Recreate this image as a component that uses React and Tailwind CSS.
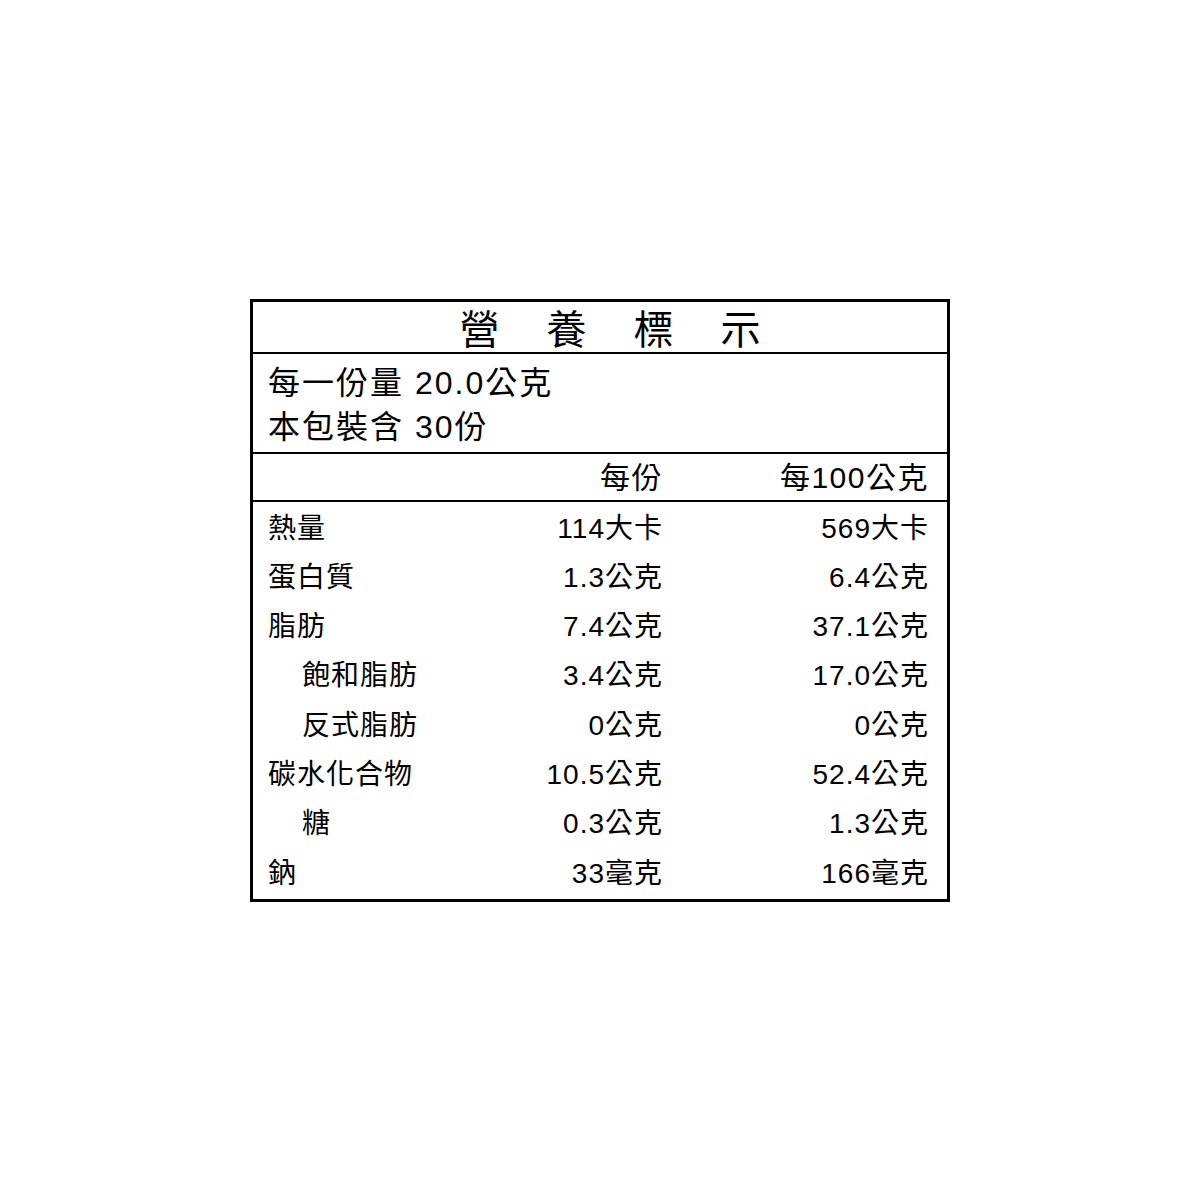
const rows = [
  { label: '熱量', a: '114大卡', b: '569大卡' },
  { label: '蛋白質', a: '1.3公克', b: '6.4公克' },
  { label: '脂肪', a: '7.4公克', b: '37.1公克' },
  { label: '飽和脂肪', a: '3.4公克', b: '17.0公克', indent: true },
  { label: '反式脂肪', a: '0公克', b: '0公克', indent: true },
  { label: '碳水化合物', a: '10.5公克', b: '52.4公克' },
  { label: '糖', a: '0.3公克', b: '1.3公克', indent: true },
  { label: '鈉', a: '33毫克', b: '166毫克' },
];

const App = () => {
  return (
    <div className="w-full h-[1200px] bg-white flex items-center justify-center text-black font-['Liberation_Sans','Noto_Sans_CJK_TC',sans-serif]">
      <div className="w-[700px] border-[3px] border-black flex flex-col">
        {/* Title */}
        <div className="h-[52px] border-b-2 border-black flex items-center justify-center gap-[47px] pl-[20px] text-[40px] leading-none font-['Noto_Sans_CJK_TC',sans-serif]">
          {['營', '養', '標', '示'].map((c) => (
            <span key={c}>{c}</span>
          ))}
        </div>

        {/* Serving */}
        <div className="h-[100px] border-b-2 border-black pl-[15px] pt-[7px] text-[32px] tracking-[2px] leading-[44px]">
          <p>每一份量 20.0公克</p>
          <p>本包裝含 30份</p>
        </div>

        {/* Column header */}
        <div className="h-[48px] border-b-2 border-black flex items-center pt-[1px] pr-[18px] text-[30px] tracking-[1.5px]">
          <div className="flex-1" />
          <div className="w-[200px] text-right">每份</div>
          <div className="w-[266px] text-right">每100公克</div>
        </div>

        {/* Rows */}
        <div className="h-[397px] pt-[2px] text-[28px] tracking-[1px] leading-[49.3px]">
          {rows.map((r) => (
            <div key={r.label} className="flex items-center pr-[18px]">
              <div className={`flex-1 ${r.indent ? 'pl-[49px]' : 'pl-[15px]'}`}>{r.label}</div>
              <div className="w-[200px] text-right">{r.a}</div>
              <div className="w-[266px] text-right">{r.b}</div>
            </div>
          ))}
        </div>
      </div>
    </div>
  );
};

export default App;
